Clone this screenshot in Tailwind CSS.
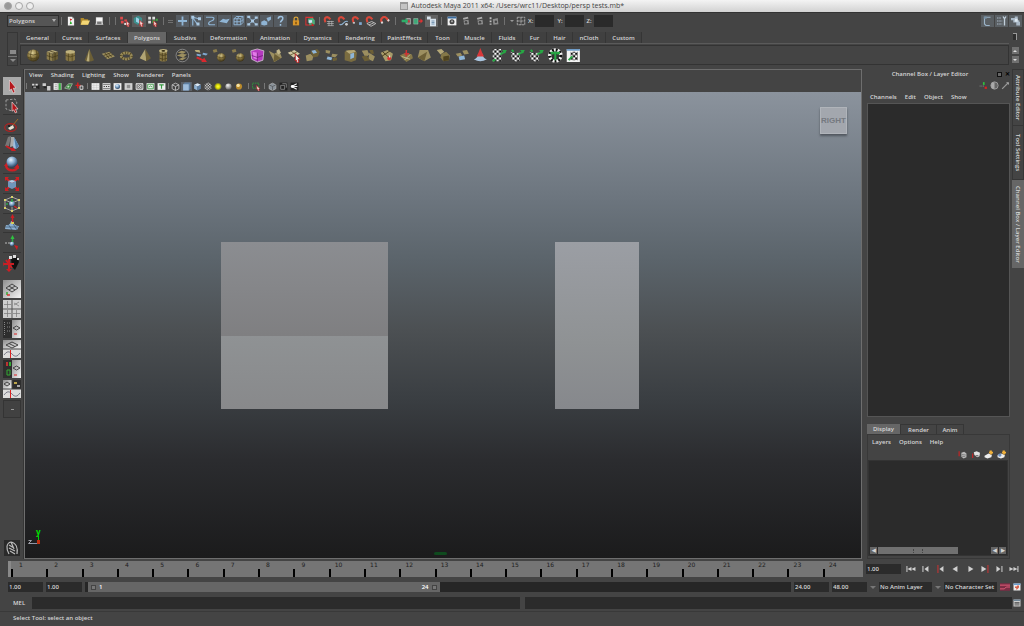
<!DOCTYPE html>
<html lang="en">
<head>
  <meta charset="UTF-8">
  <meta name="viewport" content="width=device-width, initial-scale=1.0">
  <title>Autodesk Maya 2011 x64</title>
  <script src="https://cdn.jsdelivr.net/npm/@tailwindcss/browser@4"></script>
</head>
<body class="flex h-screen flex-col overflow-hidden bg-[#444444] font-['Open_Sans','Noto_Sans',sans-serif] text-[6px] leading-[8px] font-semibold text-[#d6d6d6]">

  <!-- Icon sprite -->
  <svg class="absolute size-0" aria-hidden="true">
    <defs>
      <radialGradient id="gold" cx=".4" cy=".3" r=".7"><stop offset="0" stop-color="#e4d69c"/><stop offset=".5" stop-color="#8f7d45"/><stop offset="1" stop-color="#3a3015"/></radialGradient>
      <radialGradient id="blue" cx=".4" cy=".3" r=".7"><stop offset="0" stop-color="#e6f2fc"/><stop offset=".5" stop-color="#7fa4c8"/><stop offset="1" stop-color="#27405c"/></radialGradient>
      <radialGradient id="grey" cx=".4" cy=".3" r=".7"><stop offset="0" stop-color="#f4f4f4"/><stop offset="1" stop-color="#6a6a6a"/></radialGradient>
      <radialGradient id="glow"><stop offset="0" stop-color="#ffff40"/><stop offset=".5" stop-color="#d8d800"/><stop offset="1" stop-color="#d8d800" stop-opacity="0"/></radialGradient>
      <linearGradient id="page" x2="1" y2="1"><stop offset="0" stop-color="#8e8e8e"/><stop offset="1" stop-color="#f4f4f4"/></linearGradient>
      <pattern id="chk" width="5" height="5" patternUnits="userSpaceOnUse"><path fill="#fff" d="M0 0h5v5H0z"/><path fill="#111" d="M0 0h2.500v2.500H0zM2.500 2.500h2.500v2.500H2.500z"/></pattern>
    </defs>

    <!-- status line -->
    <symbol id="i-new" viewBox="0 0 16 16"><path fill="#f2f2f2" d="M3 1h7l3 3v11H3z"/><path fill="#c22" d="M6 4l4 1-3 3z"/><path fill="#2a2" d="M6 13l1-5 3 4z"/><path fill="#888" d="M10 1l3 3h-3z"/></symbol>
    <symbol id="i-open" viewBox="0 0 16 16"><path fill="#b08a2c" d="M1 3h5l1 2h6v9H1z"/><path fill="#f3d675" d="M4 7h12l-3 7H1z"/></symbol>
    <symbol id="i-save" viewBox="0 0 16 16"><path fill="#d8d8d8" d="M3 2h11v9l1 3H2l1-3z"/><path fill="#777" d="M5 9h7v4H5z"/><path fill="#f6f6f6" d="M4 3h9v5H4z"/></symbol>
    <symbol id="i-selh" viewBox="0 0 16 16"><path fill="#e04a4a" d="M1 1h4v4H1zM7 5h4v3H7zM2 7h4v4H2z"/><path fill="#eee" d="M7 10h3v3H7z"/><path fill="#f4dede" stroke="#b22" d="M10 7l5 5-2 .4 1 3-2 .5-1-3-1 1z"/></symbol>
    <symbol id="i-selo" viewBox="0 0 16 16"><path fill="#3e8f8c" d="M1 4l6-3 5 3v6l-6 3-5-3z"/><path fill="#9bd0e6" d="M4 3l4 2v6L4 9z"/><path fill="#f4dede" stroke="#b22" d="M9 7l5 5-2 .4 1 3-2 .5-1-3-1 1z"/></symbol>
    <symbol id="i-selc" viewBox="0 0 16 16"><path fill="#ddd" d="M1 1h4v4H1zM7 1h4v4H7zM1 7h4v4H1z"/><path fill="#4a4" d="M7 6h4v4H7zM12 4h3v3h-3z"/><path fill="#f4dede" stroke="#b22" d="M9 7l5 5-2 .4 1 3-2 .5-1-3-1 1z"/></symbol>
    <symbol id="i-plus" viewBox="0 0 16 16"><path stroke="#8fb4d4" stroke-width="2.400" d="M8 2v12M2 8h12"/></symbol>
    <symbol id="i-joint" viewBox="0 0 16 16"><path fill="none" stroke="#8fb4d4" stroke-width="1.600" d="M3 14V3l8 2M4 5l5 7"/><path fill="#a9c8e2" d="M1 1h4v4H1zM10 3h4v4h-4zM8 10h4v4H8z"/></symbol>
    <symbol id="i-curve" viewBox="0 0 16 16"><path fill="none" stroke="#8fb4d4" stroke-width="1.600" d="M2 3h8c4 0 3 4-1 5s-5 5-1 5h6"/></symbol>
    <symbol id="i-surf" viewBox="0 0 16 16"><path fill="#8fb4d4" d="M1 9l5-4 4 1 5-1-4 6-5-1z"/></symbol>
    <symbol id="i-lattice" viewBox="0 0 16 16"><path fill="none" stroke="#8fb4d4" stroke-width="1.300" d="M2 13V5l3-3h9v8l-3 3zM2 9h9l3-3M6 13V5l3-3M2 5h9v8M11 5l3-3"/></symbol>
    <symbol id="i-dyn" viewBox="0 0 16 16"><path stroke="#8fb4d4" stroke-width="1.200" d="M3 12L13 4M4 4l8 8"/><path fill="#a9c8e2" d="M1 1h4v3H1zM6 6h4v4H6zM11 11h4v3h-4zM1 11h4v3H1zM11 2h4v3h-4z"/></symbol>
    <symbol id="i-rend" viewBox="0 0 16 16"><path fill="#8fb4d4" d="M1 9l4-2 4 2v4l-4 1-4-1zM8 4l6-2v4l-4 3z"/></symbol>
    <symbol id="i-help" viewBox="0 0 16 16"><path fill="none" stroke="#9fc2e0" stroke-width="2" d="M5 5c0-4 7-4 6 0 0 2-3 3-3 5M8 12v2.400"/></symbol>
    <symbol id="i-lock" viewBox="0 0 16 16"><path fill="none" stroke="#d9a43a" stroke-width="2" d="M5 8V4c0-3 6-3 6 0v4"/><path fill="#d9962a" d="M3 7h10v8H3z"/><path fill="#6b4308" d="M7 9h2v4H7z"/></symbol>
    <symbol id="i-hilite" viewBox="0 0 16 16"><path fill="none" stroke="#d33" stroke-width="1.500" d="M2 2h10v11H2z"/><path fill="#4fae7a" d="M5 4l7-1 3 3v6l-8 1z"/><path fill="#cfe4f4" d="M6 6h5v4H6z"/><path fill="#c22" d="M10 9l4 5-3 1z"/></symbol>
    <symbol id="i-magnet" viewBox="0 0 16 16"><path fill="none" stroke="#d8483a" stroke-width="3.400" d="M3 10C-1 3 7-1 11 4l3 4"/><path stroke="#ddd" stroke-width="3" d="M2.500 9l1.500 3M12.500 6l2 2"/></symbol>
    <symbol id="i-mgrid" viewBox="0 0 16 16"><path fill="none" stroke="#d8483a" stroke-width="3" d="M3 9C-1 2 6-1 10 5"/><path fill="none" stroke="#bbb" d="M5 8h10M5 11h10M6 14h9M8 7v7M12 7v7"/></symbol>
    <symbol id="i-mcurve" viewBox="0 0 16 16"><path fill="none" stroke="#d8483a" stroke-width="3" d="M3 9C-1 2 6-1 10 5"/><path fill="none" stroke="#8fb4d4" stroke-width="1.500" d="M3 12c5 4 5-6 12-4"/><circle cx="13" cy="12" r="2" fill="#ccc"/></symbol>
    <symbol id="i-mpoint" viewBox="0 0 16 16"><path fill="none" stroke="#d8483a" stroke-width="3" d="M3 9C-1 2 6-1 10 5"/><path fill="#7fa8d0" d="M11 9h4v4h-4z"/><path fill="#ddd" d="M2 9h3v2H2z"/></symbol>
    <symbol id="i-mplane" viewBox="0 0 16 16"><path fill="none" stroke="#d8483a" stroke-width="3" d="M3 9C-1 2 6-1 10 5"/><path fill="none" stroke="#ccc" stroke-width="1.200" d="M2 11l7-3 6 3-7 4zM5 13l7-3"/></symbol>
    <symbol id="i-in" viewBox="0 0 16 16"><path fill="#777" stroke="#ccc" d="M9 4h6v9H9z"/><path fill="#2fae6a" d="M1 6h6V3l5 5-5 5v-3H1z"/><path fill="#c33" d="M11 7h3v3h-3z"/></symbol>
    <symbol id="i-out" viewBox="0 0 16 16"><path fill="#3fa878" stroke="#ccc" stroke-width=".6" d="M1 4h7v9H1z"/><path fill="#d33" d="M9 7h3V4l4 4-4 4V9H9z"/></symbol>
    <symbol id="i-hist" viewBox="0 0 16 16"><path fill="#d7e2ec" d="M2 2h5v4H2zM6 5h8v10H6z"/><path stroke="#5a7ea0" d="M8 8h4M8 10h4M8 12h4"/></symbol>
    <symbol id="i-clap" viewBox="0 0 16 16"><path fill="#f0f0f0" d="M1 1h14v14H1z"/><path fill="#3b6da0" d="M1 1h14v3H1z"/><circle cx="8" cy="9" r="4" fill="#444"/><path fill="#ddd" d="M7 7h2v3H7z"/></symbol>
    <symbol id="i-ipr" viewBox="0 0 16 16"><path fill="#8c8c8c" d="M4 7l8-1 1 7-8 1z"/><path fill="#aaa" d="M3 3l8-2 1 3-8 2z"/><circle cx="8" cy="10" r="2" fill="#444"/></symbol>
    <symbol id="i-rset" viewBox="0 0 16 16"><path fill="#bbb" d="M1 2h3v3H1zM1 7h3v3H1zM1 12h3v2H1z"/><path fill="#8c8c8c" d="M6 5l8-2 1 10-8 1z"/><circle cx="11" cy="9" r="2" fill="#444"/></symbol>
    <symbol id="i-field" viewBox="0 0 16 16"><path fill="none" stroke="#b5b5b5" stroke-width="1.300" stroke-dasharray="4 1" d="M2 2h12v12H2zM8 2v12M2 8h12"/></symbol>

    <!-- shelf -->
    <symbol id="s-sphere" viewBox="0 0 16 16"><circle cx="8" cy="8" r="6.500" fill="url(#gold)"/><path fill="none" stroke="#4a3e1c" stroke-width=".7" d="M2 6q6 3 12 0M2 10q6 3 12 0M6 2q-2 6 0 12M11 2q2 6 0 12"/></symbol>
    <symbol id="s-cube" viewBox="0 0 16 16"><path fill="#b5a878" d="M2 4l6-2 6 2-6 2z"/><path fill="#8c7d4c" d="M2 4l6 2v8l-6-2z"/><path fill="#6c5f36" d="M14 4L8 6v8l6-2z"/><path fill="none" stroke="#3e3417" stroke-width=".7" d="M2 8l6 2 6-2M5 5v8M11 5v8M5 3l6 2"/></symbol>
    <symbol id="s-cyl" viewBox="0 0 16 16"><path fill="#857544" d="M3 4v8c0 3 10 3 10 0V4z"/><ellipse cx="8" cy="4" rx="5" ry="2" fill="#bfb27e"/><path fill="none" stroke="#4a3e1c" stroke-width=".7" d="M3 8q5 3 10 0M6 6v8M10 6v8"/></symbol>
    <symbol id="s-cone" viewBox="0 0 16 16"><path fill="#6c5f36" d="M8 1l5 12q-5 3-10 0z"/><path fill="#b9ac7a" d="M8 1L5 14l3 .5z"/></symbol>
    <symbol id="s-plane" viewBox="0 0 16 16"><path fill="#9c8f60" d="M1 6l8-2 6 5-8 3z"/><path stroke="#453a1a" stroke-width=".8" d="M3 8l8-3M5 10l8-3M4 5l5 6M7 5l5 5"/></symbol>
    <symbol id="s-torus" viewBox="0 0 16 16"><ellipse cx="8" cy="8.500" rx="5.400" ry="3.300" fill="none" stroke="#978956" stroke-width="3"/><ellipse cx="8" cy="8.500" rx="5.400" ry="3.300" fill="none" stroke="#463b1b" stroke-width="3" stroke-dasharray=".7 2"/></symbol>
    <symbol id="s-pyr" viewBox="0 0 16 16"><path fill="#b2a573" d="M8 1l1 13-7-3z"/><path fill="#6c5f36" d="M8 1l6 10-5 3z"/></symbol>
    <symbol id="s-pipe" viewBox="0 0 16 16"><path fill="#857544" d="M4 3v10c0 2 8 2 8 0V3z"/><ellipse cx="8" cy="3" rx="4.500" ry="2" fill="#bfb27e"/><ellipse cx="8" cy="3" rx="2" ry=".9" fill="#332b12"/><path fill="none" stroke="#4a3e1c" stroke-width=".8" d="M4 7q4 2 8 0M4 11q4 2 8 0M7 5v9M10 5v9"/></symbol>
    <symbol id="s-soccer" viewBox="0 0 16 16"><circle cx="8" cy="8" r="6.700" fill="#3c3c3c" stroke="#aaa" stroke-width=".7"/><path fill="#9c8f60" d="M3 5l4-2 5 1-3 2zM2 8l5-2 6 1-4 3zM4 12l4-2 5 0-5 3z"/></symbol>
    <symbol id="s-comb" viewBox="0 0 16 16"><path fill="#b9ac7a" d="M1 2l5 0 1 3-5-1z"/><path fill="#7fa8d0" d="M3 6l5 1-1 2-4-1zM10 5l5 1-2 2-4-1z"/><path fill="none" stroke="#d8292f" stroke-width="2" d="M3 10l9 4"/><path fill="#d8292f" d="M11 10l3 5-6 0z"/></symbol>
    <symbol id="s-smooth" viewBox="0 0 16 16"><path fill="#8c7d4c" d="M1 2l4-1 1 3-4 1z"/><circle cx="10" cy="10" r="4.500" fill="url(#gold)"/><path fill="none" stroke="#4a3e1c" stroke-width=".6" d="M5 9q5 3 10 0M9 5q-1 5 0 10"/></symbol>
    <symbol id="s-purple" viewBox="0 0 16 16"><path fill="#b63ac0" stroke="#d8d0da" stroke-width=".8" d="M1 3l7-2 7 2-1 10-6 2-6-3z"/><path fill="#e27ae8" d="M3 4l5 1v7l-4-1z"/><path fill="none" stroke="#5d1566" stroke-width=".7" d="M2 8l6 2 6-2M8 5v9"/></symbol>
    <symbol id="s-extr" viewBox="0 0 16 16"><path fill="#9c8f60" d="M1 3l6 3 5-3 3 7-8 5z"/><path fill="#6c5f36" d="M7 6l-1 9 8-4z"/><path fill="#c4b88a" d="M9 3l3-2 2 4-3 2z"/></symbol>
    <symbol id="s-sel" viewBox="0 0 16 16"><path fill="#d0c7a2" d="M1 5l7-3 6 4-7 4z"/><path stroke="#5a4d26" stroke-width=".8" d="M4 3l7 5M3 8l8-4"/><path fill="#eee" stroke="#b22" d="M9 6l5 6-2 .3 1 3-2 .6-1-3-1 1z"/></symbol>
    <symbol id="s-bridge" viewBox="0 0 16 16"><path fill="#9c8f60" d="M1 8l5-2 3 3-1 4-6 1z"/><path fill="#6c5f36" d="M6 4l7-3 3 3-2 5-5 1z"/><path fill="#8fb6d8" d="M7 3l4-1 2 3-4 1z"/></symbol>
    <symbol id="s-app" viewBox="0 0 16 16"><path fill="#9c8f60" d="M2 2l5 1-1 3-4-1zM9 6l6 1-3 3-4-1z"/><path fill="#8fb6d8" d="M4 9l5 1-1 3-5-1z"/><path fill="#6c5f36" d="M9 11l5-1v3l-4 1z"/></symbol>
    <symbol id="s-bevel" viewBox="0 0 16 16"><path fill="#7a6c40" d="M2 4l4-2h7l2 3-1 8-5 2-7-2z"/><path fill="#b5a878" d="M3 3l9-1 2 2-7 2z"/><path fill="#8fb6d8" d="M8 6l4-1v5l-4 2z"/></symbol>
    <symbol id="s-merge" viewBox="0 0 16 16"><path fill="#9c8f60" d="M1 3l6-1 2 5-4 3zM9 5l6 4-2 5-5-2z"/><path fill="#6c5f36" d="M1 9l5-1 4 5-6 1zM9 2l4 0 1 4-3 0z"/></symbol>
    <symbol id="s-split" viewBox="0 0 16 16"><path fill="#a89b6a" d="M1 5l7-3 6 4-2 7-6 1z"/><path stroke="#453a1a" d="M3 4l9 8M2 9l9-6"/><circle cx="10" cy="11" r="2" fill="#d33"/><path fill="#fff" d="M10 8h1v2h-1z"/></symbol>
    <symbol id="s-loop" viewBox="0 0 16 16"><path fill="#857848" d="M1 8l6-3 7 2 1 4-7 4z"/><path stroke="#d0c7a2" stroke-width=".8" d="M3 9l9 3M6 13l6-6"/><path stroke="#c33" stroke-width="1.600" d="M8 2v7M6 6h5"/></symbol>
    <symbol id="s-tri" viewBox="0 0 16 16"><path fill="#9c8f60" d="M3 2h9l3 8-7 4-7-4z"/><path fill="#6c5f36" d="M1 10l10-6-3 10z"/></symbol>
    <symbol id="s-dup" viewBox="0 0 16 16"><path fill="#b5a878" d="M1 2l5-1 3 3-4 3z"/><path fill="#857848" d="M6 6l5-2 4 4-1 5-6 1-3-4z"/><path fill="#4f431f" d="M8 9l6-1v5l-6 1z"/></symbol>
    <symbol id="s-fill" viewBox="0 0 16 16"><path fill="#9c8f60" d="M8 3l5-1 2 4-5 1zM1 6l5-1 2 3-5 1z"/><path fill="#8fb6d8" d="M4 9l6-1 1 4-6 1z"/></symbol>
    <symbol id="s-sculpt" viewBox="0 0 16 16"><path fill="#a9c4de" d="M1 12q4-1 5-6h4q1 5 5 6-7 4-14 0z"/><path fill="#d8383a" d="M8 0l2 5 2 4H4l2-4z"/></symbol>
    <symbol id="s-uv" viewBox="0 0 16 16"><path fill="url(#chk)" d="M1 1h9v13H1z"/><path fill="none" stroke="#27a844" stroke-width="2" d="M9 7l5-3M1 14l3-2"/><path fill="#27a844" d="M11 2l5 0-2 4z"/></symbol>
    <symbol id="s-uvc" viewBox="0 0 16 16"><path fill="url(#chk)" d="M1 4q5 3 9 0l1 9q-5 3-9-1z"/><path fill="none" stroke="#27a844" stroke-width="2" d="M9 7l5-3M2 2l2 2"/><path fill="#27a844" d="M11 2l5 0-2 4z"/></symbol>
    <symbol id="s-uva" viewBox="0 0 16 16"><circle cx="8" cy="8" r="6" fill="#333" stroke="#f4f4f4" stroke-width="3.500"/><circle cx="8" cy="8" r="6" fill="none" stroke="#111" stroke-width="3.500" stroke-dasharray="2 2"/><path stroke="#27a844" stroke-width="2.200" d="M3 5h10M8 5v8M5 4v3M11 4v3"/></symbol>
    <symbol id="s-uve" viewBox="0 0 16 16"><path fill="#f4f4f4" d="M1 1h14v14H1z"/><path fill="#6f9cc8" d="M1 1h14v2H1z"/><path fill="url(#chk)" d="M5 4h8v9H5z"/><path stroke="#27a844" stroke-width="2" d="M3 13l4-4"/></symbol>

    <!-- panel toolbar -->
    <symbol id="p-cam" viewBox="0 0 16 16"><path fill="#222" d="M2 7h9l4-2v8l-4-2H2z"/><path fill="#d8d8d8" d="M2 3h4v3H2zM8 3h4v3H8z"/><path fill="#999" d="M4 8h5v3H4z"/></symbol>
    <symbol id="p-cam2" viewBox="0 0 16 16"><path fill="#ccc" d="M1 2h6v5H1zM9 7h6v8H9z"/><path fill="#222" d="M3 8h5v3H3z"/></symbol>
    <symbol id="p-book" viewBox="0 0 16 16"><path fill="#f0f0f0" d="M1 2h14v12H1z"/><path fill="#3cae45" d="M10 2h4v12h-4z"/><path stroke="#777" d="M3 5h4M3 8h4M3 11h4M9 2v12"/></symbol>
    <symbol id="p-img" viewBox="0 0 16 16"><path fill="#3e8a42" stroke="#ccc" d="M1 11l7-8 7 0-5 10z"/><path fill="#bfe0bf" d="M5 9l3-3 2 1-2 3z"/></symbol>
    <symbol id="p-axis" viewBox="0 0 16 16"><path stroke="#d22" stroke-width="2.400" d="M5 1v10M1 6h9"/><path fill="none" stroke="#eee" stroke-width="1.500" d="M9 7h5v6H9z"/></symbol>
    <symbol id="p-grid" viewBox="0 0 16 16"><path fill="#eee" d="M1 2h14v12H1z"/><path stroke="#bbb" stroke-width=".7" d="M1 6h14M1 10h14M5 2v12M10 2v12"/></symbol>
    <symbol id="p-film" viewBox="0 0 16 16"><path fill="#ddd" d="M1 2h14v12H1z"/><path fill="#333" d="M2 4h12v1H2zM2 11h12v1H2zM3 7h2v2H3zM7 7h2v2H7zM11 7h2v2h-2z"/></symbol>
    <symbol id="p-res" viewBox="0 0 16 16"><path fill="#eee" d="M1 2h14v12H1z"/><circle cx="8" cy="8" r="4.500" fill="url(#blue)"/></symbol>
    <symbol id="p-mask" viewBox="0 0 16 16"><path fill="#d0d0d0" d="M1 2h14v12H1z"/><path fill="#909090" d="M5 5h6v6H5z"/></symbol>
    <symbol id="p-chart" viewBox="0 0 16 16"><path fill="#555" stroke="#eee" stroke-width="1.600" d="M2 3h12v10H2z"/><circle cx="8" cy="8" r="3" fill="none" stroke="#eee" stroke-width="1.300"/><path stroke="#eee" d="M2 3l12 10M14 3L2 13"/></symbol>
    <symbol id="p-safe" viewBox="0 0 16 16"><path fill="#eee" d="M1 2h14v12H1z"/><path fill="none" stroke="#389a42" stroke-width="1.500" d="M3 4h10v8H3zM5 9l3-2 3 2"/></symbol>
    <symbol id="p-title" viewBox="0 0 16 16"><path fill="#eee" d="M1 2h14v12H1z"/><path stroke="#389a42" stroke-width="2" d="M4 5h8M8 5v7"/></symbol>
    <symbol id="p-wire" viewBox="0 0 16 16"><path fill="none" stroke="#ccc" stroke-width="1.400" d="M2 5l6-3 6 3v7l-6 3-6-3zM2 5l6 3 6-3M8 8v7"/></symbol>
    <symbol id="p-shade" viewBox="0 0 16 16"><path fill="#5e7ea0" d="M2 4l3-3h10v11l-3 3H2z"/><path fill="#9ebcda" d="M2 4h10v11H2z"/></symbol>
    <symbol id="p-shade2" viewBox="0 0 16 16"><path fill="#d9e8f5" d="M2 5l6-3 6 3-6 3z"/><path fill="#91b3d3" d="M2 5l6 3v7l-6-3z"/><path fill="#5c7fa4" d="M14 5L8 8v7l6-3z"/></symbol>
    <symbol id="p-tex" viewBox="0 0 16 16"><path fill="url(#chk)" d="M2 4l6-3 6 3v8l-6 3-6-3z"/></symbol>
    <symbol id="p-light" viewBox="0 0 16 16"><circle cx="8" cy="8" r="7" fill="url(#glow)"/></symbol>
    <symbol id="p-ball" viewBox="0 0 16 16"><circle cx="8" cy="8" r="5.500" fill="url(#grey)"/></symbol>
    <symbol id="p-gold" viewBox="0 0 16 16"><circle cx="8" cy="8" r="5.500" fill="#b98a2c"/><circle cx="6.500" cy="6" r="3" fill="#f6e3a6"/></symbol>
    <symbol id="p-iso" viewBox="0 0 16 16"><path fill="none" stroke="#2f9a3c" stroke-width="1.500" stroke-dasharray="3 1" d="M1 2h11v9H1z"/><path fill="#f4dede" stroke="#b22" d="M8 6l6 6-2 .4 1 3-2 .5-1-3-1 1z"/></symbol>
    <symbol id="p-xray" viewBox="0 0 16 16"><path fill="#8a939b" stroke="#bbb" stroke-width="1.200" d="M2 5l6-3 6 3v7l-6 3-6-3z"/><path fill="none" stroke="#444" d="M2 5l6 3 6-3M8 8v7"/></symbol>
    <symbol id="p-xact" viewBox="0 0 16 16"><path fill="#222" d="M1 1h14v14H1z"/><path fill="none" stroke="#bbb" d="M3 6h7v7H3zM6 3h7v7"/></symbol>
    <symbol id="p-joint" viewBox="0 0 16 16"><path fill="#222" d="M1 1h14v14H1z"/><path stroke="#eee" stroke-width="2" d="M3 8l9-5M3 8l9 5M3 8h10"/><circle cx="4" cy="8" r="2.500" fill="#fff"/></symbol>

    <!-- toolbox -->
    <symbol id="t-arrow" viewBox="0 0 18 18"><path fill="#b5171c" stroke="#eaeaea" stroke-width=".6" d="M6.500 3l6.500 8-2.700.2 1.700 4-1.900.8-1.700-4-2 1.600z"/></symbol>
    <symbol id="t-lasso" viewBox="0 0 18 18"><path fill="none" stroke="#999" stroke-dasharray="2.500 1.500" d="M3 4l9-1 2 4-5 8-6-2z"/><path fill="#b5171c" stroke="#e8d6d6" stroke-width=".7" d="M9 6l6 7-2.500.2 1.400 3-1.700.7-1.400-3-1.800 1.300z"/></symbol>
    <symbol id="t-paint" viewBox="0 0 18 18"><ellipse cx="7.500" cy="11.500" rx="5.800" ry="3.800" fill="none" stroke="#b3201f" stroke-width="1.200"/><path fill="#e9e3d2" d="M5 12l5-3 1 3-4 2z"/><path stroke="#a06a26" d="M10 9l5-6"/><path fill="#222" d="M5 9h2v2H5z"/></symbol>
    <symbol id="t-move" viewBox="0 0 18 18"><path fill="#777" d="M5 2l3-1-2 10-4 0z"/><path fill="#aaa" d="M8 2l3 0 0 9-4 1z"/><path fill="#9dc0e0" d="M11 2l5 9q-2 4-6 2z"/><path fill="#507da8" d="M11 2l5 9-3 3z"/><path fill="none" stroke="#cc1f24" stroke-width="2" d="M3 11l7 4"/><path fill="#cc1f24" d="M10 12l3 4-5 0z"/></symbol>
    <symbol id="t-rot" viewBox="0 0 18 18"><path fill="none" stroke="#cc1f24" stroke-width="2.400" d="M3 10c0 7 12 7 12 1"/><path fill="#cc1f24" d="M1 11l3-4 2 4zM10 12l5-3 1 5z"/><circle cx="9" cy="7" r="5.500" fill="url(#blue)"/></symbol>
    <symbol id="t-scale" viewBox="0 0 18 18"><path stroke="#cc1f24" stroke-width="1.800" d="M3 3l12 12M15 3L3 15"/><path fill="#cc1f24" d="M2 2h4l-4 4zM16 2h-4l4 4zM2 16h4l-4-4zM16 16h-4l4-4z"/><path fill="#b6d0e8" d="M5 6l4-1 4 1-4 2z"/><path fill="#6f96bb" d="M5 6l4 2v6l-4-2zM13 6L9 8v6l4-2z"/></symbol>
    <symbol id="t-univ" viewBox="0 0 18 18"><path fill="none" stroke="#bbb" stroke-width=".8" d="M2 5l7-3 7 3v8l-7 3-7-3zM2 5l7 3 7-3M9 8v8"/><path fill="#d8d06a" d="M1 4h2v2H1zM8 1h2v2H8zM15 4h2v2h-2zM1 12h2v2H1zM8 15h2v2H8zM15 12h2v2h-2z"/><circle cx="9" cy="9" r="3" fill="url(#blue)"/><path stroke="#2aa84a" stroke-width="1.500" d="M9 4v3M5 9H3"/><path stroke="#cc1f24" stroke-width="1.500" d="M11 11l3 2"/></symbol>
    <symbol id="t-soft" viewBox="0 0 18 18"><path fill="#8db0d0" d="M3 11q4 1 5-4h2q1 5 6 5l-2 4-12-1z"/><path stroke="#33506c" stroke-width=".7" d="M5 10l4 6M9 8l5 8M3 13h12"/><path fill="#d6ca5a" d="M8 8h3v2H8z"/><path stroke="#cc1f24" stroke-width="1.500" d="M9.500 2v6"/><path fill="#cc1f24" d="M9.500 0l2 4h-4z"/></symbol>
    <symbol id="t-manip" viewBox="0 0 18 18"><path stroke="#2aa84a" stroke-width="1.500" d="M9.500 3v6"/><path fill="#30c040" d="M9.500 1l2 4h-4z"/><path stroke="#bbb" stroke-dasharray="2 1" d="M2 9h7"/><circle cx="9" cy="10" r="2.300" fill="url(#blue)"/><path fill="#cc1f24" d="M11 11l4 1-1 4z"/></symbol>
    <symbol id="t-last" viewBox="0 0 18 18"><path fill="#111" d="M8 5l6-2 2 5-4 8-3-3z"/><path fill="#ddd" d="M6 2h3v3H6zM10 1h3v3h-3zM14 4h2v2h-2z"/><path stroke="#cc1f24" stroke-width="2" d="M6 5v12M1 10h10M3 6l6 8"/><path fill="#cc1f24" d="M1 7v6l-1-3zM3 15h6l-3 3z"/></symbol>
    <symbol id="l-view" viewBox="0 0 18 18"><path fill="url(#page)" d="M0 0h18v18H0z"/><path fill="none" stroke="#444" d="M3 8l6-4 6 4-6 4zM6 6l6 4M12 6l-6 4"/><path stroke="#2a2" stroke-width="1.300" d="M4 12v3"/><path stroke="#d22" stroke-width="1.300" d="M4 15h3"/></symbol>
    <symbol id="l-four" viewBox="0 0 18 18"><path fill="#555" d="M0 0h18v18H0z"/><path fill="#cfcfcf" d="M0 0h8.500v8.500H0zM9.500 0H18v8.500H9.500zM0 9.500h8.500V18H0zM9.500 9.500H18V18H9.500z"/><path stroke="#777" stroke-width=".7" d="M4.500 1v7M1 4.500h7M4.500 10v7M1 13.500h7M13.500 10v7M10 13.500h7M11 5l5-3M11 3l5 3"/></symbol>
    <symbol id="l-outl" viewBox="0 0 18 18"><path fill="#2e2e2e" d="M0 0h9v18H0z"/><path fill="url(#page)" d="M9 0h9v18H9z"/><path stroke="#888" stroke-dasharray="1 1" d="M1.500 2v14M4 3h4M4 7h3M4 11h4"/><path fill="none" stroke="#444" d="M10 8l3.500-2 3.500 2-3.500 2z"/><path stroke="#d22" d="M11 14h3"/></symbol>
    <symbol id="l-graph" viewBox="0 0 18 18"><path fill="url(#page)" d="M0 0h18v8.500H0z"/><path fill="#ddd" d="M0 9.500h18V18H0z"/><path fill="none" stroke="#444" d="M3 5l6-3 6 3-6 3zM6 3.500l6 3"/><path fill="none" stroke="#667" stroke-width=".8" d="M1 15q4-6 8-1t8-1"/><path stroke="#d22" d="M7.500 10v8"/></symbol>
    <symbol id="l-hyper" viewBox="0 0 18 18"><path fill="#2e2e2e" d="M0 0h9v18H0z"/><path fill="url(#page)" d="M9 0h9v18H9z"/><path fill="#b33" d="M3 2h2v4H3z"/><path fill="#3a3" d="M6 2h2v4H6z"/><path fill="none" stroke="#3a3" d="M4 10h3v5H4z"/><path fill="none" stroke="#444" d="M10 8l3.500-2 3.500 2-3.500 2z"/><path stroke="#d22" d="M11 15h3"/></symbol>
    <symbol id="l-three" viewBox="0 0 18 18"><path fill="url(#page)" d="M0 0h8.500v8.500H0z"/><path fill="#2e2e2e" d="M9.500 0H18v8.500H9.500z"/><path fill="#ddd" d="M0 9.500h18V18H0z"/><path fill="none" stroke="#444" d="M1 4l3-2 3 2-3 2z"/><path fill="#bda64a" d="M11 2h3v2h-3z"/><path fill="#aaa" d="M14 5h3v2h-3z"/><path fill="none" stroke="#667" stroke-width=".8" d="M1 15q4-6 8-1t8-1"/><path stroke="#d22" d="M7.500 10v8"/></symbol>
    <symbol id="t-maya" viewBox="0 0 16 16"><path fill="#2a2a2a" d="M0 0h16v16H0z"/><path fill="none" stroke="#bbb" stroke-width="1.200" d="M5 14C2 9 2 3 7 2c5 1 7 6 6 12M5 5l5 3M5 8l6 3M6 11l5 3M7 2l3 7"/></symbol>

    <!-- right side -->
    <symbol id="r-box" viewBox="0 0 16 16"><path fill="none" stroke="#9cb4c8" stroke-width="1.500" d="M4 3h8M4 3v9l2 2h5"/><path fill="#7890a4" d="M3 2h4v3H3z"/></symbol>
    <symbol id="r-tool" viewBox="0 0 16 16"><path fill="none" stroke="#a9b8c6" stroke-width="1.500" stroke-dasharray="2 1" d="M2 4h6M2 8h7M2 12h7"/><path fill="none" stroke="#c2d0dc" stroke-width="1.800" d="M10 2l2 3 2-3M12 5v9"/></symbol>
    <symbol id="r-attr" viewBox="0 0 16 16"><path fill="#a9b8c6" d="M2 4h5v3H2zM7 2h4v4H7zM5 7h8v3H5zM9 9h5v5H9z"/><path fill="#dde8f0" d="M7 5h4v4H7z"/></symbol>
    <symbol id="r-axis" viewBox="0 0 16 16"><path stroke="#888" stroke-width="1.500" stroke-dasharray="2 1" d="M1 9h8"/><path fill="#2fc23e" d="M7 2h3v5H7z"/><path fill="#d22" d="M10 10h4v4h-4z"/></symbol>
    <symbol id="r-half" viewBox="0 0 16 16"><circle cx="8" cy="8" r="6.500" fill="#666" stroke="#aaa" stroke-width="1.400"/><path fill="#aaa" d="M8 2a6 6 0 000 12z"/></symbol>
    <symbol id="r-pen" viewBox="0 0 16 16"><path stroke="#999" stroke-width="2" d="M2 14L12 4"/><path fill="#aaa" d="M9 2h5v5z"/></symbol>
    <symbol id="y-up" viewBox="0 0 16 16"><path stroke="#c22" stroke-width="2" d="M2 2v9"/><path fill="#bbb" d="M6 5l5-2 4 3v7l-5 2-4-3z"/><path stroke="#555" d="M7 8l7 1M7 11l6 1"/></symbol>
    <symbol id="y-down" viewBox="0 0 16 16"><path stroke="#c22" stroke-width="2" d="M3 6v8"/><path fill="#e2e2e2" d="M5 4l5-2 6 3-1 6-4 2-5-4z"/><path fill="#777" d="M7 9l4 3 3-3z"/></symbol>
    <symbol id="y-new" viewBox="0 0 16 16"><path fill="#eee" d="M1 10l7-4 6 3-1 4-7 2-5-2z"/><path fill="#f2b13a" d="M10 1h4v2h2v3h-2v2h-3V6H9V3h1z"/></symbol>
    <symbol id="y-news" viewBox="0 0 16 16"><path fill="#eee" d="M1 9l6-3 7 3-1 4-6 2-6-2z"/><circle cx="5" cy="9" r="3" fill="#6b8fc0"/><path fill="#f2b13a" d="M10 1h4v2h2v3h-2v2h-3V6H9V3h1z"/></symbol>
    <symbol id="k-key" viewBox="0 0 16 12"><path fill="#7b2d44" d="M0 0h16v12H0z"/><path fill="none" stroke="#e2607c" stroke-width="1.500" d="M0 3h16M0 9h7l3-3h6"/></symbol>
    <symbol id="k-pref" viewBox="0 0 16 16"><path fill="#ececec" d="M1 1h14v14H1z"/><path fill="#6da0d0" d="M1 1h14v3H1z"/><path fill="#d6604a" d="M4 7h4v3H4zM8 5h4v4l-4 4H6z"/></symbol>
    <symbol id="k-script" viewBox="0 0 16 16"><path fill="#ccc" d="M1 1h14v14H1z"/><path fill="#6f8596" d="M1 1h14v3H1z"/><path stroke="#444" stroke-width="1.500" d="M3 7h10M3 9.500h10M3 12h10"/></symbol>
  </svg>

  <!-- Title bar -->
  <header class="relative flex h-[12px] shrink-0 items-center justify-center bg-gradient-to-b from-[#f4f4f4] to-[#d2d2d2] text-[7px] font-normal text-[#444444]">
    <div class="absolute left-[4px] flex gap-[3px]">
      <button aria-label="Close" class="size-[8px] rounded-full border border-[#a5a5a5] bg-[#999999]"></button>
      <button aria-label="Minimize" class="size-[8px] rounded-full border border-[#a5a5a5] bg-[#eeeeee]"></button>
      <button aria-label="Zoom" class="size-[8px] rounded-full border border-[#a5a5a5] bg-[#eeeeee]"></button>
    </div>
    <span class="mr-[3px] h-[8px] w-[8px] border border-t-2 border-[#999999] bg-[#c4c4c4]"></span>
    <h1>Autodesk Maya 2011 x64: /Users/wrc11/Desktop/persp tests.mb*</h1>
  </header>

  <!-- Status line -->
  <div class="flex h-[17px] shrink-0 items-center border-t border-[#333333] pr-[2px] pl-[7px]">
    <div class="relative">
      <select aria-label="Menu set" class="block h-[12px] w-[52px] appearance-none border border-[#2e2e2e] bg-[#555555] pl-px leading-[8px]"><option>Polygons</option></select>
      <span class="pointer-events-none absolute top-[4px] right-[3px] border-x-2 border-t-3 border-x-transparent border-t-[#b0b0b0]"></span>
    </div>
    <span class="mx-[2px] h-[8px] w-px bg-[#707070]"></span>
    <div class="flex">
      <button aria-label="New scene" class="w-[14px]"><svg class="h-[10px] w-full"><use href="#i-new"/></svg></button>
      <button aria-label="Open scene" class="w-[14px]"><svg class="h-[10px] w-full"><use href="#i-open"/></svg></button>
      <button aria-label="Save scene" class="w-[14px]"><svg class="h-[10px] w-full"><use href="#i-save"/></svg></button>
    </div>
    <div class="flex w-[12px] justify-center gap-[5px]"><span class="h-[8px] w-px bg-[#707070]"></span><span class="h-[8px] w-px bg-[#707070]"></span></div>
    <div class="flex">
      <button aria-label="Select by hierarchy" class="w-[14px]"><svg class="h-[11px] w-full"><use href="#i-selh"/></svg></button>
      <button aria-label="Select by object" class="w-[14px] bg-[#5b5b5b]"><svg class="h-[12px] w-full"><use href="#i-selo"/></svg></button>
      <button aria-label="Select by component" class="w-[14px]"><svg class="h-[11px] w-full"><use href="#i-selc"/></svg></button>
    </div>
    <div class="flex w-[16px] items-center justify-center gap-[4px]"><span class="h-[8px] w-px bg-[#707070]"></span><span class="h-[3px] w-[5px] border-y border-[#707070]"></span></div>
    <div class="flex gap-px">
      <button aria-label="Handles" class="w-[13px] bg-[#555b61]"><svg class="h-[12px] w-full"><use href="#i-plus"/></svg></button>
      <button aria-label="Joints" class="w-[13px] bg-[#555b61]"><svg class="h-[12px] w-full"><use href="#i-joint"/></svg></button>
      <button aria-label="Curves" class="w-[13px] bg-[#555b61]"><svg class="h-[12px] w-full"><use href="#i-curve"/></svg></button>
      <button aria-label="Surfaces" class="w-[13px] bg-[#555b61]"><svg class="h-[12px] w-full"><use href="#i-surf"/></svg></button>
      <button aria-label="Deformations" class="w-[13px] bg-[#555b61]"><svg class="h-[12px] w-full"><use href="#i-lattice"/></svg></button>
      <button aria-label="Dynamics" class="w-[13px] bg-[#555b61]"><svg class="h-[12px] w-full"><use href="#i-dyn"/></svg></button>
      <button aria-label="Rendering" class="w-[13px] bg-[#555b61]"><svg class="h-[12px] w-full"><use href="#i-rend"/></svg></button>
      <button aria-label="Miscellaneous" class="w-[13px] bg-[#555b61]"><svg class="h-[12px] w-full"><use href="#i-help"/></svg></button>
    </div>
    <div class="ml-[2px] flex">
      <button aria-label="Lock selection" class="w-[14px]"><svg class="h-[10px] w-full"><use href="#i-lock"/></svg></button>
      <button aria-label="Highlight selection" class="w-[14px]"><svg class="h-[11px] w-full"><use href="#i-hilite"/></svg></button>
    </div>
    <span class="mx-[2px] h-[8px] w-px bg-[#707070]"></span>
    <div class="flex">
      <button aria-label="Snap to grids" class="w-[14px]"><svg class="h-[11px] w-full"><use href="#i-mgrid"/></svg></button>
      <button aria-label="Snap to curves" class="w-[14px]"><svg class="h-[11px] w-full"><use href="#i-mcurve"/></svg></button>
      <button aria-label="Snap to points" class="w-[14px]"><svg class="h-[11px] w-full"><use href="#i-mpoint"/></svg></button>
      <button aria-label="Snap to view planes" class="w-[14px]"><svg class="h-[11px] w-full"><use href="#i-mplane"/></svg></button>
      <button aria-label="Make live" class="w-[14px]"><svg class="h-[10px] w-full"><use href="#i-magnet"/></svg></button>
    </div>
    <span class="mr-[4px] ml-[3px] h-[8px] w-px bg-[#707070]"></span>
    <div class="flex">
      <button aria-label="Inputs" class="w-[12px]"><svg class="h-[10px] w-full"><use href="#i-in"/></svg></button>
      <button aria-label="Outputs" class="w-[12px]"><svg class="h-[10px] w-full"><use href="#i-out"/></svg></button>
      <button aria-label="Construction history" class="ml-px w-[13px] bg-[#626262]"><svg class="h-[12px] w-full"><use href="#i-hist"/></svg></button>
    </div>
    <span class="mx-[3px] h-[8px] w-px bg-[#707070]"></span>
    <div class="flex">
      <button aria-label="Render view" class="w-[14px]"><svg class="h-[10px] w-full"><use href="#i-clap"/></svg></button>
      <button aria-label="Render frame" class="w-[14px]"><svg class="h-[10px] w-full"><use href="#i-ipr"/></svg></button>
      <button aria-label="IPR render" class="w-[14px]"><svg class="h-[10px] w-full"><use href="#i-ipr"/></svg></button>
      <button aria-label="Render settings" class="w-[14px]"><svg class="h-[10px] w-full"><use href="#i-rset"/></svg></button>
    </div>
    <span class="mx-[3px] h-[8px] w-px bg-[#707070]"></span>
    <span class="mx-[2px] border-x-2 border-t-2 border-x-transparent border-t-[#999999]"></span>
    <svg class="size-[10px]"><use href="#i-field"/></svg>
    <div class="ml-[2px] flex items-center gap-[3px]">
      <label class="flex items-center gap-[2px]">X:<input class="h-[12px] w-[19px] bg-[#2a2a2a]"></label>
      <label class="flex items-center gap-[2px]">Y:<input class="h-[12px] w-[19px] bg-[#2a2a2a]"></label>
      <label class="flex items-center gap-[2px]">Z:<input class="h-[12px] w-[19px] bg-[#2a2a2a]"></label>
    </div>
    <div class="ml-auto flex gap-px">
      <button aria-label="Channel box" class="w-[13px] bg-[#5a5f63]"><svg class="h-[12px] w-full"><use href="#r-box"/></svg></button>
      <button aria-label="Tool settings" class="w-[13px] bg-[#5a5f63]"><svg class="h-[12px] w-full"><use href="#r-tool"/></svg></button>
      <button aria-label="Attribute editor" class="w-[13px] bg-[#5a5f63]"><svg class="h-[12px] w-full"><use href="#r-attr"/></svg></button>
    </div>
  </div>

  <!-- Shelf -->
  <section class="flex h-[39px] shrink-0 pt-[3px]">
    <div class="mr-[2px] ml-[7px] flex h-[34px] w-[11px] flex-col items-center justify-end gap-[2px] border border-[#363636] pb-[3px]">
      <button aria-label="Shelf tabs" class="h-[4px] w-[6px] bg-[#8a8a8a]"></button>
      <span class="h-px w-full bg-[#777777]"></span>
      <button aria-label="Shelf menu" class="border-x-3 border-t-3 border-x-transparent border-t-[#8a8a8a]"></button>
    </div>
    <div class="min-w-0 flex-1">
      <nav class="flex h-[12px] border-b border-[#5a5a5a]">
        <button class="w-[36px] border-r border-[#353535] bg-[#404040]">General</button>
        <button class="w-[33px] border-r border-[#353535] bg-[#404040]">Curves</button>
        <button class="w-[39px] border-r border-[#353535] bg-[#404040]">Surfaces</button>
        <button class="w-[39px] border-r border-[#353535] bg-[#666666]">Polygons</button>
        <button class="w-[37px] border-r border-[#353535] bg-[#404040]">Subdivs</button>
        <button class="w-[50px] border-r border-[#353535] bg-[#404040]">Deformation</button>
        <button class="w-[43px] border-r border-[#353535] bg-[#404040]">Animation</button>
        <button class="w-[42px] border-r border-[#353535] bg-[#404040]">Dynamics</button>
        <button class="w-[43px] border-r border-[#353535] bg-[#404040]">Rendering</button>
        <button class="w-[46px] border-r border-[#353535] bg-[#404040]">PaintEffects</button>
        <button class="w-[30px] border-r border-[#353535] bg-[#404040]">Toon</button>
        <button class="w-[34px] border-r border-[#353535] bg-[#404040]">Muscle</button>
        <button class="w-[31px] border-r border-[#353535] bg-[#404040]">Fluids</button>
        <button class="w-[24px] border-r border-[#353535] bg-[#404040]">Fur</button>
        <button class="w-[26px] border-r border-[#353535] bg-[#404040]">Hair</button>
        <button class="w-[33px] border-r border-[#353535] bg-[#404040]">nCloth</button>
        <button class="w-[36px] border-r border-[#353535] bg-[#404040]">Custom</button>
      </nav>
      <div class="mt-px flex h-[20px] items-center border border-[#333333] pl-[3px]">
        <div class="grid w-[559px] grid-cols-30">
          <button aria-label="Sphere"><svg class="h-[15px] w-full"><use href="#s-sphere"/></svg></button>
          <button aria-label="Cube"><svg class="h-[15px] w-full"><use href="#s-cube"/></svg></button>
          <button aria-label="Cylinder"><svg class="h-[15px] w-full"><use href="#s-cyl"/></svg></button>
          <button aria-label="Cone"><svg class="h-[15px] w-full"><use href="#s-cone"/></svg></button>
          <button aria-label="Plane"><svg class="h-[15px] w-full"><use href="#s-plane"/></svg></button>
          <button aria-label="Torus"><svg class="h-[15px] w-full"><use href="#s-torus"/></svg></button>
          <button aria-label="Pyramid"><svg class="h-[15px] w-full"><use href="#s-pyr"/></svg></button>
          <button aria-label="Pipe"><svg class="h-[15px] w-full"><use href="#s-pipe"/></svg></button>
          <button aria-label="Soccer ball"><svg class="h-[15px] w-full"><use href="#s-soccer"/></svg></button>
          <button aria-label="Combine"><svg class="h-[15px] w-full"><use href="#s-comb"/></svg></button>
          <button aria-label="Separate"><svg class="h-[15px] w-full"><use href="#s-smooth"/></svg></button>
          <button aria-label="Smooth"><svg class="h-[15px] w-full"><use href="#s-smooth"/></svg></button>
          <button aria-label="Subdiv proxy"><svg class="h-[15px] w-full"><use href="#s-purple"/></svg></button>
          <button aria-label="Extrude"><svg class="h-[15px] w-full"><use href="#s-extr"/></svg></button>
          <button aria-label="Select faces"><svg class="h-[15px] w-full"><use href="#s-sel"/></svg></button>
          <button aria-label="Bridge"><svg class="h-[15px] w-full"><use href="#s-bridge"/></svg></button>
          <button aria-label="Append"><svg class="h-[15px] w-full"><use href="#s-app"/></svg></button>
          <button aria-label="Bevel"><svg class="h-[15px] w-full"><use href="#s-bevel"/></svg></button>
          <button aria-label="Merge"><svg class="h-[15px] w-full"><use href="#s-merge"/></svg></button>
          <button aria-label="Split"><svg class="h-[15px] w-full"><use href="#s-split"/></svg></button>
          <button aria-label="Edge loop"><svg class="h-[15px] w-full"><use href="#s-loop"/></svg></button>
          <button aria-label="Triangulate"><svg class="h-[15px] w-full"><use href="#s-tri"/></svg></button>
          <button aria-label="Duplicate face"><svg class="h-[15px] w-full"><use href="#s-dup"/></svg></button>
          <button aria-label="Fill hole"><svg class="h-[15px] w-full"><use href="#s-fill"/></svg></button>
          <button aria-label="Sculpt"><svg class="h-[15px] w-full"><use href="#s-sculpt"/></svg></button>
          <button aria-label="Planar map"><svg class="h-[15px] w-full"><use href="#s-uv"/></svg></button>
          <button aria-label="Cylindrical map"><svg class="h-[15px] w-full"><use href="#s-uvc"/></svg></button>
          <button aria-label="Spherical map"><svg class="h-[15px] w-full"><use href="#s-uvc"/></svg></button>
          <button aria-label="Automatic map"><svg class="h-[15px] w-full"><use href="#s-uva"/></svg></button>
          <button aria-label="UV editor"><svg class="h-[15px] w-full"><use href="#s-uve"/></svg></button>
        </div>
      </div>
    </div>
    <div class="mr-[5px] ml-[2px] flex w-[8px] flex-col items-center pt-[1px]">
      <button aria-label="Trash" class="mb-[7px] h-[7px] w-[4px] border-t border-r border-[#999999] bg-[#2e2e2e]"></button>
      <button aria-label="Scroll shelf up" class="mb-[2px] flex size-[7px] items-center justify-center bg-[#707070]"><span class="border-x-2 border-b-2 border-x-transparent border-b-[#dddddd]"></span></button>
      <button aria-label="Scroll shelf down" class="flex size-[7px] items-center justify-center bg-[#707070]"><span class="border-x-2 border-t-2 border-x-transparent border-t-[#dddddd]"></span></button>
    </div>
  </section>

  <!-- Workspace -->
  <main class="flex min-h-0 flex-1 pt-px">

    <!-- Tool box -->
    <aside class="flex w-[24px] flex-col border-r border-[#353535] pt-[8px] pl-[3px]">
      <div class="flex h-[195px] w-[18px] flex-col justify-between">
        <button aria-label="Select tool" class="bg-[#a9a9a9]"><svg class="size-[18px]"><use href="#t-arrow"/></svg></button>
        <button aria-label="Lasso tool" class="border-b border-[#353535]"><svg class="size-[18px]"><use href="#t-lasso"/></svg></button>
        <button aria-label="Paint select" class="border-b border-[#353535]"><svg class="size-[18px]"><use href="#t-paint"/></svg></button>
        <button aria-label="Move tool" class="border-b border-[#353535]"><svg class="size-[18px]"><use href="#t-move"/></svg></button>
        <button aria-label="Rotate tool" class="border-b border-[#353535]"><svg class="size-[18px]"><use href="#t-rot"/></svg></button>
        <button aria-label="Scale tool" class="border-b border-[#353535]"><svg class="size-[18px]"><use href="#t-scale"/></svg></button>
        <button aria-label="Universal manipulator" class="border-b border-[#353535]"><svg class="size-[18px]"><use href="#t-univ"/></svg></button>
        <button aria-label="Soft modification" class="border-b border-[#353535]"><svg class="size-[18px]"><use href="#t-soft"/></svg></button>
        <button aria-label="Show manipulator" class="border-b border-[#353535]"><svg class="size-[18px]"><use href="#t-manip"/></svg></button>
        <button aria-label="Last tool"><svg class="size-[18px]"><use href="#t-last"/></svg></button>
      </div>
      <div class="mt-[8px] flex w-[18px] flex-col gap-[2px]">
        <button aria-label="Single view"><svg class="size-[18px]"><use href="#l-view"/></svg></button>
        <button aria-label="Four view"><svg class="size-[18px]"><use href="#l-four"/></svg></button>
        <button aria-label="Outliner and persp"><svg class="size-[18px]"><use href="#l-outl"/></svg></button>
        <button aria-label="Persp and graph"><svg class="size-[18px]"><use href="#l-graph"/></svg></button>
        <button aria-label="Hypershade and persp"><svg class="size-[18px]"><use href="#l-hyper"/></svg></button>
        <button aria-label="Persp, hypergraph and graph"><svg class="size-[18px]"><use href="#l-three"/></svg></button>
        <button aria-label="More layouts" class="flex h-[18px] items-center justify-center border border-[#343434] bg-[#414141]"><span class="h-px w-[3px] bg-[#999999]"></span></button>
      </div>
      <button aria-label="Maya" class="mt-auto mb-[3px] ml-[1px] size-[16px]"><svg class="size-[16px]"><use href="#t-maya"/></svg></button>
    </aside>

    <!-- View panel -->
    <section class="flex min-w-0 flex-1 flex-col border border-[#6e6e6e]">
      <nav class="flex h-[10px] items-center gap-[8px] pl-[4px]">
        <button>View</button>
        <button>Shading</button>
        <button>Lighting</button>
        <button>Show</button>
        <button>Renderer</button>
        <button>Panels</button>
      </nav>
      <div class="flex h-[12px] items-center pl-[1px]">
        <span class="mr-[3px] h-[6px] w-px bg-[#777777]"></span>
        <button aria-label="Select camera" class="w-[11px]"><svg class="h-[9px] w-full"><use href="#p-cam"/></svg></button>
        <button aria-label="Camera attributes" class="w-[11px]"><svg class="h-[9px] w-full"><use href="#p-cam2"/></svg></button>
        <button aria-label="Bookmarks" class="w-[11px]"><svg class="h-[9px] w-full"><use href="#p-book"/></svg></button>
        <button aria-label="Image plane" class="w-[11px]"><svg class="h-[9px] w-full"><use href="#p-img"/></svg></button>
        <button aria-label="2D pan and zoom" class="w-[11px]"><svg class="h-[9px] w-full"><use href="#p-axis"/></svg></button>
        <span class="mx-[2px] h-[6px] w-px bg-[#777777]"></span>
        <button aria-label="Grid" class="w-[11px]"><svg class="h-[9px] w-full"><use href="#p-grid"/></svg></button>
        <button aria-label="Film gate" class="w-[11px]"><svg class="h-[9px] w-full"><use href="#p-film"/></svg></button>
        <button aria-label="Resolution gate" class="w-[11px]"><svg class="h-[9px] w-full"><use href="#p-res"/></svg></button>
        <button aria-label="Gate mask" class="w-[11px]"><svg class="h-[9px] w-full"><use href="#p-mask"/></svg></button>
        <button aria-label="Field chart" class="w-[11px]"><svg class="h-[9px] w-full"><use href="#p-chart"/></svg></button>
        <button aria-label="Safe action" class="w-[11px]"><svg class="h-[9px] w-full"><use href="#p-safe"/></svg></button>
        <button aria-label="Safe title" class="w-[11px]"><svg class="h-[9px] w-full"><use href="#p-title"/></svg></button>
        <span class="mx-px h-[6px] w-px bg-[#777777]"></span>
        <button aria-label="Wireframe" class="w-[11px]"><svg class="h-[9px] w-full"><use href="#p-wire"/></svg></button>
        <button aria-label="Smooth shade" class="w-[11px] bg-[#5c6066]"><svg class="h-[9px] w-full"><use href="#p-shade"/></svg></button>
        <button aria-label="Wireframe on shaded" class="w-[11px]"><svg class="h-[9px] w-full"><use href="#p-shade2"/></svg></button>
        <button aria-label="Textured" class="w-[10px]"><svg class="h-[9px] w-full"><use href="#p-tex"/></svg></button>
        <button aria-label="All lights" class="w-[10px]"><svg class="h-[9px] w-full"><use href="#p-light"/></svg></button>
        <button aria-label="Shadows" class="w-[11px]"><svg class="h-[9px] w-full"><use href="#p-ball"/></svg></button>
        <button aria-label="High quality" class="w-[10px]"><svg class="h-[9px] w-full"><use href="#p-gold"/></svg></button>
        <span class="mr-[2px] ml-[4px] h-[6px] w-px bg-[#777777]"></span>
        <button aria-label="Isolate select" class="w-[11px]"><svg class="h-[9px] w-full"><use href="#p-iso"/></svg></button>
        <span class="mx-[2px] h-[6px] w-px bg-[#777777]"></span>
        <button aria-label="X-ray" class="w-[11px]"><svg class="h-[9px] w-full"><use href="#p-xray"/></svg></button>
        <button aria-label="X-ray active" class="w-[11px]"><svg class="h-[9px] w-full"><use href="#p-xact"/></svg></button>
        <button aria-label="X-ray joints" class="w-[11px]"><svg class="h-[9px] w-full"><use href="#p-joint"/></svg></button>
      </div>

      <!-- 3D view: objects are placed on a free canvas -->
      <div class="relative min-h-0 flex-1 overflow-hidden bg-[linear-gradient(180deg,#8b939d_0%,#6c757e_23%,#5b646b_36%,#4c5053_51%,#3a3e42_66%,#2b2c2f_79%,#1b1b1c_100%)]">
        <div class="absolute top-[150px] left-[196px] h-[167px] w-[167px] bg-[linear-gradient(180deg,#8b8d91_0%,#7f7f81_56%,#8f9294_56%,#88898b_100%)]"></div>
        <div class="absolute top-[150px] left-[530px] h-[167px] w-[84px] bg-[linear-gradient(180deg,#9b9ea4_0%,#8f9294_60%,#86888c_100%)]"></div>
        <button class="absolute top-[15px] right-[14px] flex size-[27px] items-center justify-center border border-[#b0b4ba] bg-[#a3a7ae] font-['Liberation_Sans_Narrow','Liberation_Sans',sans-serif] text-[8px] font-bold text-[#757980] shadow-[0_2px_2px_rgba(50,55,62,0.6)]">RIGHT</button>
        <svg class="absolute bottom-[12px] left-[2px] h-[18px] w-[16px]" viewBox="0 0 16 18">
          <path stroke="#00d800" d="M11.500 8v6"/>
          <path stroke="#8a93a8" d="M4 15.500h7"/>
          <path fill="#c03010" d="M10 12h3v4h-3z"/>
          <path fill="none" stroke="#a0a0a8" d="M1.500 12.500h3l-3 3h3"/>
        </svg>
        <span class="absolute bottom-[22px] left-[11px] text-[8px] font-bold text-[#00e000]">y</span>
        <span class="absolute bottom-[3px] left-1/2 -ml-[9px] h-[3px] w-[13px] rounded-full bg-[#0f4a1e]"></span>
      </div>
    </section>

    <!-- Channel box / layer editor -->
    <aside class="flex w-[148px] flex-col pl-[5px]">
      <div class="relative flex h-[10px] items-center justify-center pr-[17px]">
        <h2>Channel Box / Layer Editor</h2>
        <div class="absolute right-0 flex gap-[3px]">
          <button aria-label="Float" class="size-[5px] border border-[#111111] bg-[#666666]"></button>
          <button aria-label="Close panel" class="size-[5px] leading-[5px] font-bold text-black">✕</button>
        </div>
      </div>
      <div class="flex h-[12px] items-center justify-end gap-[2px]">
        <svg class="size-[9px]"><use href="#r-axis"/></svg>
        <svg class="size-[9px]"><use href="#r-half"/></svg>
        <svg class="size-[9px]"><use href="#r-pen"/></svg>
      </div>
      <nav class="flex h-[12px] items-center gap-[8px] pl-[3px]">
        <button>Channels</button>
        <button>Edit</button>
        <button>Object</button>
        <button>Show</button>
      </nav>
      <div class="flex-1 border border-[#555555] bg-[#2b2b2b]"></div>
      <div class="mt-[7px] flex h-[10px] shrink-0">
        <button class="w-[33px] bg-[#666666]">Display</button>
        <button class="w-[37px] border border-b-0 border-[#363636]">Render</button>
        <button class="w-[27px] border border-b-0 border-l-0 border-[#363636]">Anim</button>
      </div>
      <div class="shrink-0 border border-[#383838] pb-[2px]">
        <nav class="flex h-[13px] items-center gap-[8px] pl-[4px]">
          <button>Layers</button>
          <button>Options</button>
          <button>Help</button>
        </nav>
        <div class="flex h-[12px] items-center justify-end gap-[4px] pr-[3px]">
          <button aria-label="Move layer up"><svg class="size-[9px]"><use href="#y-up"/></svg></button>
          <button aria-label="Move layer down"><svg class="size-[9px]"><use href="#y-down"/></svg></button>
          <button aria-label="New layer"><svg class="size-[9px]"><use href="#y-new"/></svg></button>
          <button aria-label="New layer from selection"><svg class="size-[9px]"><use href="#y-news"/></svg></button>
        </div>
        <div class="mr-px flex h-[96px] flex-col justify-end border border-[#333333] bg-[#2b2b2b] p-px">
          <div class="flex h-[7px] gap-px">
            <button aria-label="Scroll left" class="w-[7px] bg-[#666666] text-[5px] leading-[7px]">◀</button>
            <span class="flex w-[80px] items-center justify-center bg-[#707070]"><span class="h-[4px] w-[10px] border-x border-dotted border-[#444444]"></span></span>
            <button aria-label="Scroll left" class="ml-auto w-[7px] bg-[#666666] text-[5px] leading-[7px]">◀</button>
            <button aria-label="Scroll right" class="w-[7px] bg-[#666666] text-[5px] leading-[7px]">▶</button>
          </div>
        </div>
      </div>
    </aside>

    <!-- Side tabs -->
    <nav class="ml-[2px] flex w-[12px] flex-col">
      <button class="h-[57px] border border-[#363636] [writing-mode:vertical-rl]">Attribute Editor</button>
      <button class="h-[54px] border border-t-0 border-[#363636] [writing-mode:vertical-rl]">Tool Settings</button>
      <button class="h-[88px] bg-[#666666] [writing-mode:vertical-rl]">Channel Box / Layer Editor</button>
    </nav>
  </main>

  <!-- Time slider -->
  <section class="mt-[1px] flex h-[18px] shrink-0 items-center">
    <div class="ml-[8px] flex h-[16px] flex-1 bg-[#757575] pr-[5px]">
      <div class="w-[3px] bg-[#898989]"></div>
      <ol class="grid flex-1 grid-cols-24 font-['DejaVu_Sans',sans-serif] font-normal text-[#1c1c1c]" id="frames"></ol>
    </div>
    <input aria-label="Current frame" value="1.00" class="ml-[3px] h-[10px] w-[35px] bg-[#2b2b2b] pl-px">
    <div class="mr-[2px] ml-[2px] grid w-[119px] grid-cols-8">
      <button aria-label="Go to start"><svg class="h-[8px] w-full" viewBox="0 0 10 8"><path fill="#d0d0d0" d="M1 1h1v6H1zM2 4l4-2v4zM6 4l4-2v4z"/></svg></button>
      <button aria-label="Step back"><svg class="h-[8px] w-full" viewBox="0 0 10 8"><path fill="#d0d0d0" d="M2 1h1v6H2zM4 4l4-3v6z"/></svg></button>
      <button aria-label="Previous key"><svg class="h-[8px] w-full" viewBox="0 0 10 8"><path fill="#c33" d="M2 0h1v8H2z"/><path fill="#d0d0d0" d="M4 4l4-3v6z"/></svg></button>
      <button aria-label="Play backwards"><svg class="h-[8px] w-full" viewBox="0 0 10 8"><path fill="#d0d0d0" d="M2 4l5-3v6z"/></svg></button>
      <button aria-label="Play forwards"><svg class="h-[8px] w-full" viewBox="0 0 10 8"><path fill="#d0d0d0" d="M8 4L3 1v6z"/></svg></button>
      <button aria-label="Next key"><svg class="h-[8px] w-full" viewBox="0 0 10 8"><path fill="#c33" d="M8 0h1v8H8z"/><path fill="#d0d0d0" d="M7 4L2 1v6z"/></svg></button>
      <button aria-label="Step forward"><svg class="h-[8px] w-full" viewBox="0 0 10 8"><path fill="#d0d0d0" d="M7 1h1v6H7zM6 4L2 1v6z"/></svg></button>
      <button aria-label="Go to end"><svg class="h-[8px] w-full" viewBox="0 0 10 8"><path fill="#d0d0d0" d="M8 1h1v6H8zM8 4L4 2v4zM4 4L0 2v4z"/></svg></button>
    </div>
  </section>

  <!-- Range slider -->
  <section class="mt-[4px] flex h-[10px] shrink-0 items-stretch gap-[3px] pr-[3px] pl-[8px]">
    <input aria-label="Animation start" value="1.00" class="w-[35px] bg-[#2b2b2b] pl-px">
    <input aria-label="Playback start" value="1.00" class="w-[36px] bg-[#2b2b2b] pl-px">
    <div class="flex min-w-0 flex-1 bg-[#262626] pl-[3px]">
      <div class="flex w-1/2 items-center justify-between bg-[#666666] px-[3px] text-white">
        <span class="flex items-center gap-[3px]"><span class="size-[5px] border border-[#444444] bg-[#777777]"></span>1</span>
        <span class="flex items-center gap-[3px]">24<span class="size-[5px] border border-[#444444] bg-[#777777]"></span></span>
      </div>
    </div>
    <input aria-label="Playback end" value="24.00" class="w-[35px] bg-[#2b2b2b] pl-px">
    <input aria-label="Animation end" value="48.00" class="w-[35px] bg-[#2b2b2b] pl-px">
    <span class="self-center border-x-3 border-t-3 border-x-transparent border-t-[#777777]"></span>
    <select aria-label="Anim layer" class="w-[53px] appearance-none bg-[#2b2b2b] pl-px"><option>No Anim Layer</option></select>
    <span class="self-center border-x-3 border-t-3 border-x-transparent border-t-[#777777]"></span>
    <select aria-label="Character set" class="w-[53px] appearance-none bg-[#2b2b2b] pl-px"><option>No Character Set</option></select>
    <button aria-label="Auto keyframe"><svg class="h-[8px] w-[10px]"><use href="#k-key"/></svg></button>
    <button aria-label="Animation preferences"><svg class="size-[8px]"><use href="#k-pref"/></svg></button>
  </section>

  <!-- Command line -->
  <section class="mt-[5px] flex h-[12px] shrink-0 items-stretch pr-[3px]">
    <label for="mel" class="w-[32px] self-center pl-[13px]">MEL</label>
    <input id="mel" class="min-w-0 flex-1 bg-[#2b2b2b]">
    <output class="ml-[5px] min-w-0 flex-1 bg-[#2b2b2b]"></output>
    <button aria-label="Script editor" class="ml-px"><svg class="size-[8px]"><use href="#k-script"/></svg></button>
  </section>

  <!-- Help line -->
  <footer class="mt-[2px] flex h-[15px] shrink-0 items-center border-t border-[#393939] pb-[2px] pl-[13px]">Select Tool: select an object</footer>

  <script>
    // One cell per frame: number on top, tick mark at the left edge
    const frames = document.getElementById('frames');
    for (let i = 1; i <= 24; i++) {
      frames.innerHTML += `
        <li class="flex flex-col justify-between">
          <span class="w-[20px] text-center">${i}</span>
          <span class="h-[8px] w-[2px] bg-black"></span>
        </li>`;
    }
  </script>
</body>
</html>
